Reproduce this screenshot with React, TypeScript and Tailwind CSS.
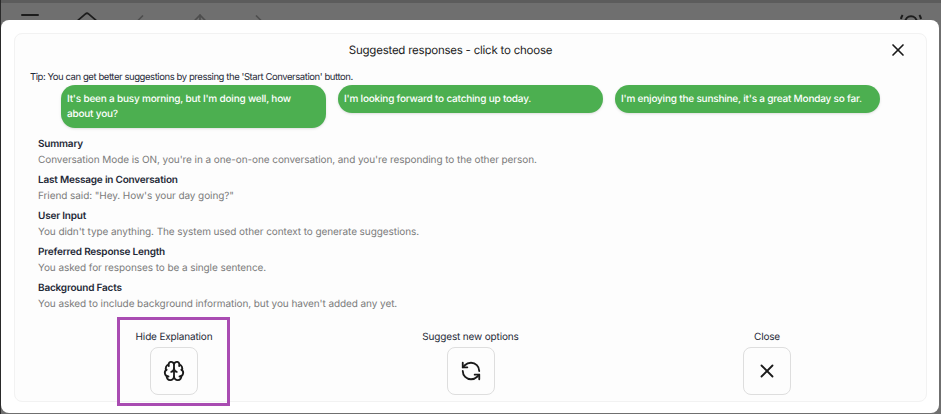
import { X, Menu, House, ChevronLeft, ChevronRight, ArrowUp, Brain, RefreshCcw } from "lucide-react";
import type { ComponentType } from "react";

const suggestions = [
  "It's been a busy morning, but I'm doing well, how about you?",
  "I'm looking forward to catching up today.",
  "I'm enjoying the sunshine, it's a great Monday so far.",
];

const explanation = [
  ["Summary", "Conversation Mode is ON, you're in a one-on-one conversation, and you're responding to the other person."],
  ["Last Message in Conversation", 'Friend said: "Hey. How\'s your day going?"'],
  ["User Input", "You didn't type anything. The system used other context to generate suggestions."],
  ["Preferred Response Length", "You asked for responses to be a single sentence."],
  ["Background Facts", "You asked to include background information, but you haven't added any yet."],
];

export default function App() {
  return (
    <div className="relative h-[414px] w-[941px] overflow-hidden border-l border-[#2a2a2a] bg-[#6f6f6f] font-['Inter',sans-serif] [text-rendering:geometricPrecision]">
      <div className="relative h-5 border-t-[3px] border-[#5c5c5c] text-[#1c1c1c]">
        <Menu className="absolute left-[17px] top-[7px] h-6 w-6" strokeWidth={2} />
        <House className="absolute left-[72px] top-[8px] h-7 w-7" strokeWidth={1.5} />
        <ChevronLeft className="absolute left-[129px] top-[8px] h-5 w-5 opacity-40" />
        <ArrowUp className="absolute left-[189px] top-[8px] h-5 w-5 opacity-40" />
        <ChevronRight className="absolute left-[248px] top-[8px] h-5 w-5 opacity-40" />
        <svg className="absolute left-[898px] top-[6px] h-6 w-6" viewBox="0 0 24 24" fill="none" stroke="currentColor" strokeWidth="2">
          <path d="M6 14c0-9 12-9 12 0" />
          <path d="M2 10c.3-1.500.8-2.800 1.600-4M22 10c-.3-1.500-.8-2.800-1.600-4" />
        </svg>
      </div>

      <div className="absolute left-0 top-5 h-[393px] w-[938px] rounded-lg bg-white px-[13px] pt-[13px]">
        <div className="h-[369px] w-[913px] rounded-lg border border-[#f2f2f2] bg-[#fdfdfd]">
          <div className="relative flex h-[29px] items-center justify-center pr-[40px] pt-[4px] text-[11.5px] tracking-[-0.02em] text-[#1a1a1a]">
            <span>Suggested responses - click to choose</span>
            <X className="absolute right-[18px] top-[6px] h-5 w-5 text-[#1a1a1a]" strokeWidth={2} />
          </div>

          <div className="pl-[15px] pt-[8px] text-[9.5px] leading-[14px] tracking-[-0.045em] text-[#1f2937]">
            Tip: You can get better suggestions by pressing the 'Start Conversation' button.
          </div>

          <div className="flex items-start gap-3 pl-[46px]">
            {suggestions.map((s) => (
              <div
                key={s}
                className="w-[265px] rounded-[14px] bg-[#4caf50] py-[6.5px] pl-[6px] pr-[10px] text-[10px] font-medium leading-[15px] tracking-[-0.02em] text-white shadow-sm"
              >
                {s}
              </div>
            ))}
          </div>

          <div className="mt-[8px] pl-[23px]">
            {explanation.map(([title, body]) => (
              <div key={title} className="h-[36px]">
                <div className="text-[10px] font-semibold leading-[16px] tracking-[-0.02em] text-[#1f2937]">{title}</div>
                <div className="text-[10px] leading-[16px] tracking-[-0.08px] text-[#7b7b7b]">{body}</div>
              </div>
            ))}
          </div>

          <div className="flex pl-[135px] pt-[14px] tracking-[-0.01em]">
            <Action label="Hide Explanation" Icon={Brain} />
            <div className="w-[248.5px]" />
            <Action label="Suggest new options" Icon={RefreshCcw} />
            <div className="w-[248.5px]" />
            <Action label="Close" Icon={X} />
          </div>
        </div>
      </div>

      <div className="absolute left-[116px] top-[317px] h-[89px] w-[113px] border-[3px] border-[#a94cb2]" />
    </div>
  );
}

function Action({ label, Icon }: { label: string; Icon: ComponentType<{ className?: string; strokeWidth?: number }> }) {
  return (
    <div className="flex w-[48px] flex-col items-center gap-[3px]">
      <span className="whitespace-nowrap text-[10px] leading-[14px] text-[#1f2937]">{label}</span>
      <button className="flex h-[48px] w-[48px] items-center justify-center rounded-lg border border-[#dedede] bg-[#fdfdfd] text-[#1a1a1a]">
        <Icon className="h-[22px] w-[22px]" strokeWidth={2} />
      </button>
    </div>
  );
}
